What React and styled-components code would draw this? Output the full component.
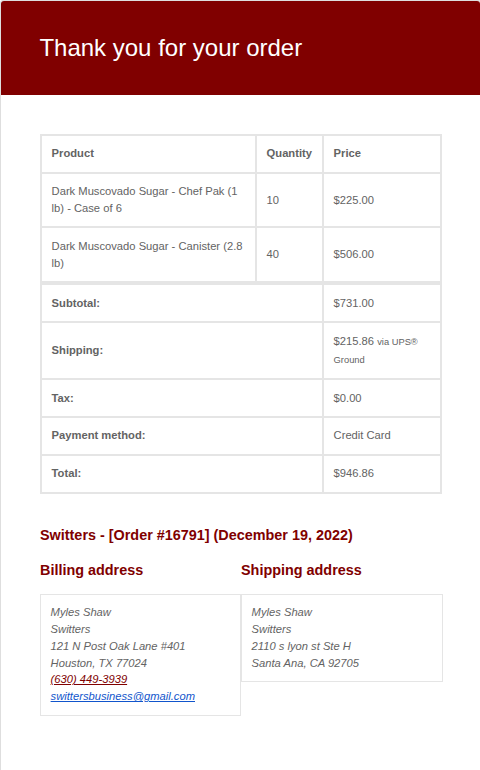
import React from 'react'
import styled, { createGlobalStyle } from 'styled-components'

const GlobalStyle = createGlobalStyle`
  html, body {
    margin: 0;
    background: #fff;
    overflow-x: hidden;
  }
`;

const Container = styled.div`
  box-sizing: border-box;
  width: 481px;
  min-height: 770px;
  background: #fff;
  border: 1px solid #dedede;
  border-bottom: 0;
  border-radius: 3px 3px 0 0;
  font-family: 'Liberation Sans', Arial, sans-serif;
`;

const Header = styled.div`
  background: #800000;
  border-radius: 3px 3px 0 0;
  padding: 28.8px 38.4px;
`;

const Title = styled.h1`
  margin: 0;
  color: #fff;
  font-size: 24px;
  font-weight: 300;
  line-height: 150%;
`;

const Body = styled.div`
  padding: 39px 38px 32px 39px;
  color: #636363;
  font-size: 11.2px;
  line-height: 150%;
`;

const OrderTable = styled.table`
  width: 402px;
  table-layout: fixed;
  border-collapse: separate;
  border-spacing: 0;
  border: 1px solid #e5e5e5;
  color: #636363;
  font-size: 11.2px;
  line-height: 150%;
  margin-bottom: 32px;
`;

const Cell = styled.td`
  border: 1px solid #e5e5e5;
  padding: 9.6px;
  text-align: left;
  vertical-align: middle;
  font-weight: ${p => (p.$bold ? 'bold' : 'normal')};
  border-top-width: ${p => (p.$first ? '3px' : '1px')};
  word-wrap: break-word;
`;

const Small = styled.small`
  font-size: smaller;
`;

const Heading = styled.h2`
  margin: 0 0 ${p => p.$gap || '14.4px'};
  color: #800000;
  font-size: 14.4px;
  font-weight: bold;
  line-height: 130%;
`;

const Addresses = styled.div`
  display: grid;
  grid-template-columns: 201px 202px;
  align-items: start;
`;

const Column = styled.div`
  display: flex;
  flex-direction: column;
`;

const Address = styled.address`
  padding: 9.6px;
  border: 1px solid #e5e5e5;
  color: #636363;
  font-style: italic;
  font-size: 11.2px;
  line-height: 150%;
`;

const Line = styled.div``;

const Link = styled.a`
  color: ${p => p.$color};
  text-decoration: underline;
`;

const items = [
  { name: 'Dark Muscovado Sugar - Chef Pak (1 lb) - Case of 6', qty: 10, price: '$225.00' },
  { name: 'Dark Muscovado Sugar - Canister (2.8 lb)', qty: 40, price: '$506.00' },
];

const totals = [
  { label: 'Subtotal:', value: '$731.00' },
  { label: 'Shipping:', value: <>$215.86 <Small>via UPS® Ground</Small></> },
  { label: 'Tax:', value: '$0.00' },
  { label: 'Payment method:', value: 'Credit Card' },
  { label: 'Total:', value: '$946.86' },
];

const App = () => {
  return (
    <>
      <GlobalStyle />
      <Container>
        <Header>
          <Title>Thank you for your order</Title>
        </Header>
        <Body>
          <OrderTable>
            <colgroup>
              <col style={{ width: 215 }} />
              <col style={{ width: 67 }} />
              <col style={{ width: 118 }} />
            </colgroup>
            <thead>
              <tr>
                <Cell as="th" $bold>Product</Cell>
                <Cell as="th" $bold>Quantity</Cell>
                <Cell as="th" $bold>Price</Cell>
              </tr>
            </thead>
            <tbody>
              {items.map(item => (
                <tr key={item.name}>
                  <Cell>{item.name}</Cell>
                  <Cell>{item.qty}</Cell>
                  <Cell>{item.price}</Cell>
                </tr>
              ))}
            </tbody>
            <tfoot>
              {totals.map((row, i) => (
                <tr key={row.label}>
                  <Cell as="th" colSpan={2} $bold $first={i === 0}>{row.label}</Cell>
                  <Cell $first={i === 0}>{row.value}</Cell>
                </tr>
              ))}
            </tfoot>
          </OrderTable>

          <Heading $gap="16px">Switters - [Order #16791] (December 19, 2022)</Heading>

          <Addresses>
            <Column>
              <Heading>Billing address</Heading>
              <Address>
                <Line>Myles Shaw</Line>
                <Line>Switters</Line>
                <Line>121 N Post Oak Lane #401</Line>
                <Line>Houston, TX 77024</Line>
                <Line><Link $color="#800000" href="tel:6304493939">(630) 449-3939</Link></Line>
                <Line><Link $color="#1155cc" href="mailto:swittersbusiness@gmail.com">swittersbusiness@gmail.com</Link></Line>
              </Address>
            </Column>
            <Column>
              <Heading>Shipping address</Heading>
              <Address>
                <Line>Myles Shaw</Line>
                <Line>Switters</Line>
                <Line>2110 s lyon st Ste H</Line>
                <Line>Santa Ana, CA 92705</Line>
              </Address>
            </Column>
          </Addresses>
        </Body>
      </Container>
    </>
  )
}

export default App
